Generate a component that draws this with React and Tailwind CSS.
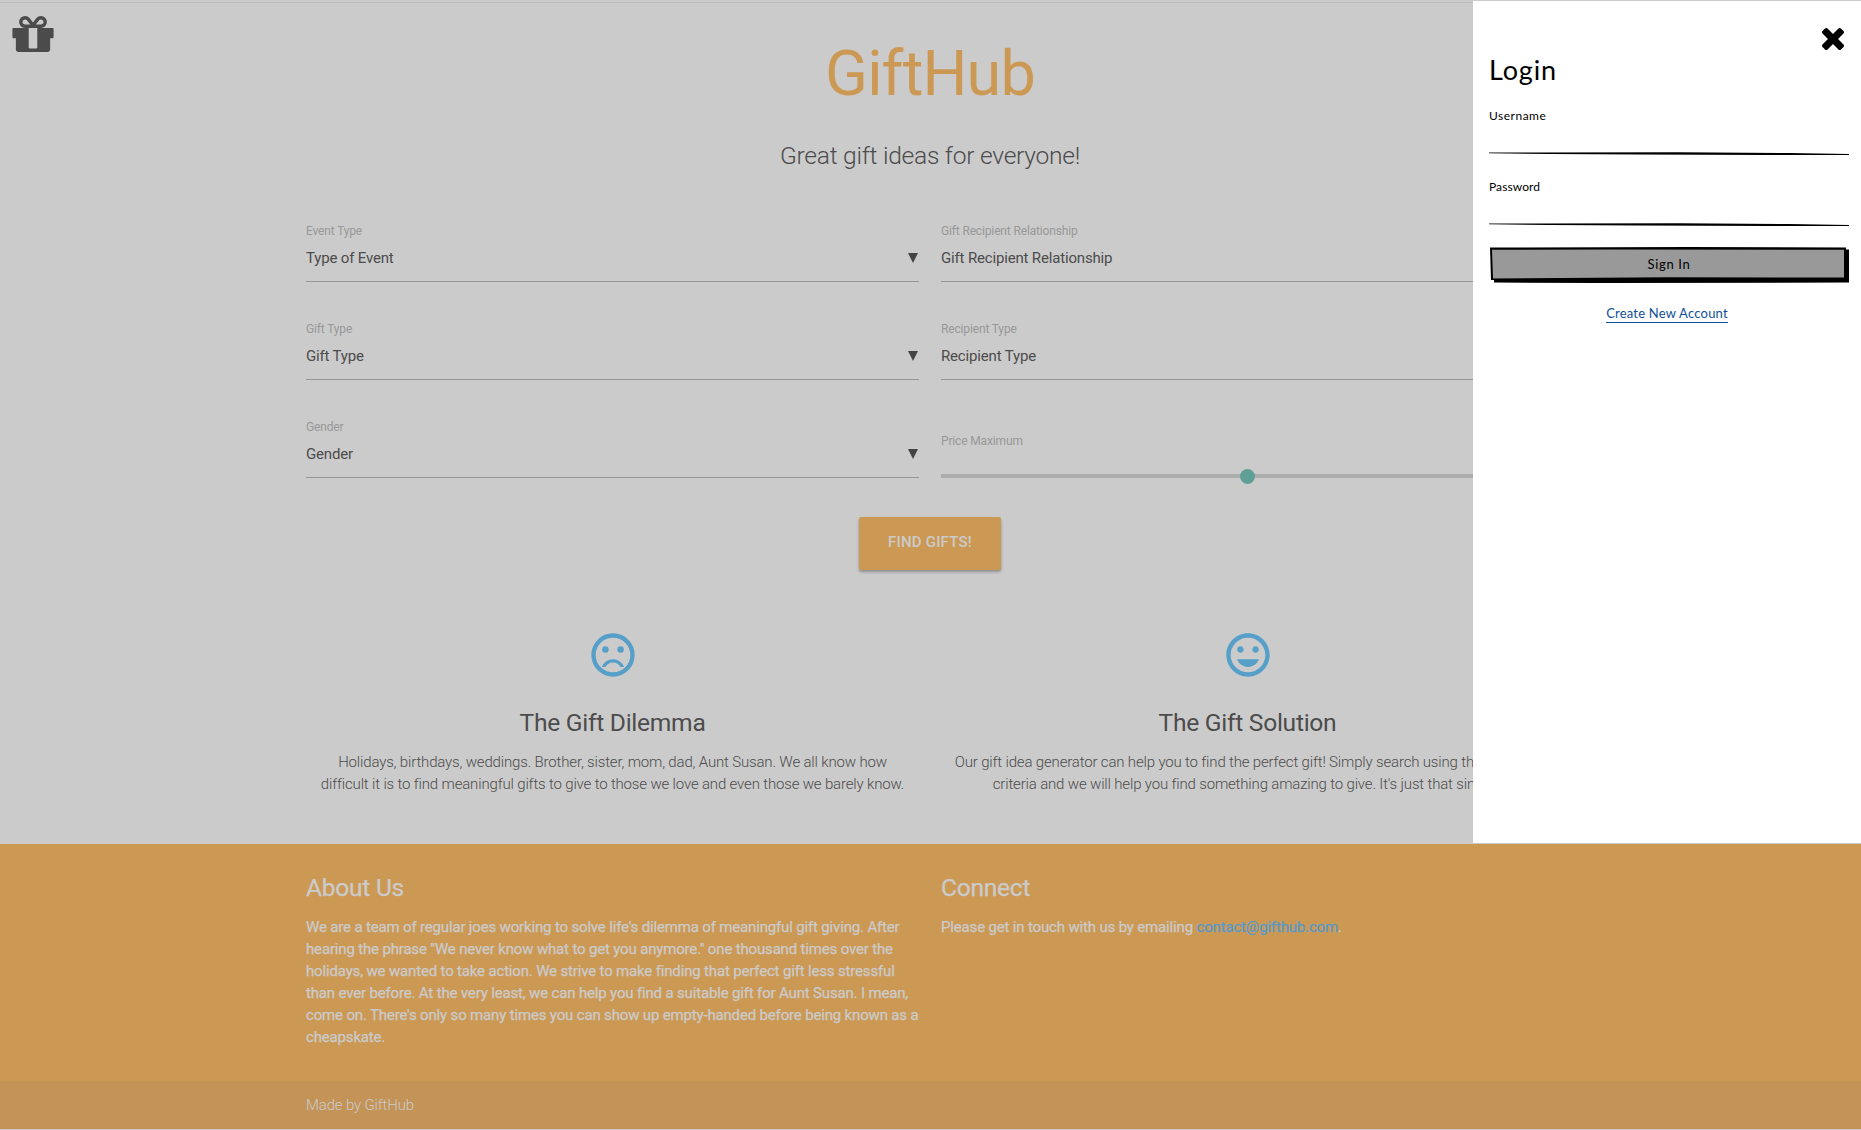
import { MdMood } from "react-icons/md";

function GiftIcon() {
  return (
    <svg viewBox="0 0 1536 1344" className="ml-[12px] mt-[16px] h-[36px] w-[42px]" fill="#4b4b4b">
      <g transform="translate(0 1344) scale(1 -1)">
        <path d="M928 180v56v468v192h-320v-192v-468v-56q0 -25 18 -38.5t46 -13.5h192q28 0 46 13.5t18 38.5zM472 1024h195l-126 161q-26 31 -69 31q-40 0 -68 -28t-28 -68t28 -68t68 -28zM1160 1120q0 40 -28 68t-68 28q-43 0 -69 -31l-125 -161h194q40 0 68 28t28 68zM1536 864v-320q0 -14 -9 -23t-23 -9h-96v-416q0 -40 -28 -68t-68 -28h-1088q-40 0 -68 28t-28 68v416h-96q-14 0 -23 9t-9 23v320q0 14 9 23t23 9h440q-93 0 -158.5 65.5t-65.5 158.5t65.5 158.5t158.5 65.5q107 0 168 -77l128 -165l128 165q61 77 168 77q93 0 158.5 -65.5t65.5 -158.5t-65.5 -158.5t-158.5 -65.5h440q14 0 23 -9t9 -23z" />
      </g>
    </svg>
  );
}

function CloseIcon() {
  return (
    <svg viewBox="110 0 1188 1188" className="h-[22px] w-[22px]" fill="#000">
      <g transform="translate(0 1170) scale(1 -1)">
        <path d="M1298 214q0 -40 -28 -68l-136 -136q-28 -28 -68 -28t-68 28l-294 294l-294 -294q-28 -28 -68 -28t-68 28l-136 136q-28 28 -28 68t28 68l294 294l-294 294q-28 28 -28 68t28 68l136 136q28 28 68 28t68 -28l294 -294l294 294q28 28 68 28t68 -28l136 -136q28 -28 28 -68t-28 -68l-294 -294l294 -294q28 -28 28 -68z" />
      </g>
    </svg>
  );
}

function SadIcon() {
  return (
    <svg viewBox="0 0 24 24" className="h-[52px] w-[52px]" fill="#559fc8">
      <circle cx="12" cy="12" r="9" fill="none" stroke="#559fc8" strokeWidth="2" />
      <circle cx="8.5" cy="9.5" r="1.5" />
      <circle cx="15.5" cy="9.5" r="1.5" />
      <path d="M12 14c-2.33 0-4.32 1.45-5.12 3.5h1.67c.69-1.19 1.97-2 3.45-2s2.75.81 3.45 2h1.67c-.8-2.05-2.79-3.5-5.12-3.5z" />
    </svg>
  );
}

function SelectField({ label, value }) {
  return (
    <div className="h-[59px] border-b border-[#979797]">
      <div className="text-[12px] leading-[16px] tracking-[-0.15px] text-[#989898]">{label}</div>
      <div className="mt-[8px] flex justify-between leading-[22px] text-[#4c4c4c]">
        <span>{value}</span>
        <svg viewBox="0 0 10 10" className="mr-[1px] mt-[6px] h-[10px] w-[10px]" fill="#444">
          <path d="M0 0H10L5 10z" />
        </svg>
      </div>
    </div>
  );
}

function PriceSlider() {
  return (
    <div className="pt-[14px]">
      <div className="text-[12px] leading-[16px] tracking-[-0.15px] text-[#989898]">Price Maximum</div>
      <div className="mt-[25px] flex h-[4px] items-center justify-center bg-[#acacac]">
        <div className="h-[15px] w-[15px] shrink-0 rounded-full bg-[#5f9f97]" />
      </div>
    </div>
  );
}

function SketchLine() {
  return (
    <svg viewBox="0 0 360 4" className="block h-[4px] w-[360px]" fill="#000">
      <path d="M0 0.6L50 0.5L190 0.2L300 1L360 2V3H280L150 2.5L60 2.1L0 1.3z" />
    </svg>
  );
}

function LoginPanel() {
  return (
    <aside className="absolute left-[1473px] top-[1px] h-[842px] w-[388px] bg-white pl-[16px] font-['Lato','Noto_Sans',sans-serif] text-black">
      <div className="flex h-[52px] justify-end pr-[17px] pt-[27px]">
        <CloseIcon />
      </div>
      <h2 className="h-[55px] text-[27px] leading-[34px] tracking-[0.85px]">Login</h2>
      <div className="h-[44px] text-[12px] leading-[16px] tracking-[0.5px]">Username</div>
      <SketchLine />
      <div className="mt-[23px] h-[44px] text-[12px] leading-[16px] tracking-[0.1px]">Password</div>
      <SketchLine />
      <button className="relative mt-[20px] block h-[36px] w-[360px] text-[13px] leading-[36px] tracking-[0.65px]">
        <svg viewBox="0 0 360 36" className="absolute inset-0 h-[36px] w-[360px]">
          <path d="M1 0.5L200 0L357 0.5V2.5H360V35.5L110 36L5 35.5V33H2z" fill="#000" />
          <path d="M3 2.8L120 2.4L355 2.8V30.6L180 30.2L4 31.5z" fill="#999" />
        </svg>
        <span className="relative -top-[1px]">Sign In</span>
      </button>
      <div className="mt-[18px] w-[356px] text-center">
        <a className="inline-block border-b border-[#0f4f96] text-[13px] leading-[17px] tracking-[0.22px] text-[#0f4f96]">Create New Account</a>
      </div>
    </aside>
  );
}

export default function App() {
  return (
    <div className="relative h-[1130px] w-[1861px] overflow-hidden bg-[#cbcbcb] font-['Roboto',sans-serif] text-[15px] leading-[22px] tracking-[-0.165px] text-[#4c4c4c]">
      <header className="flex h-[223px]">
        <div className="w-[306px] shrink-0">
          <div className="mt-[2px] h-px w-[1861px] bg-[#bcbcbc]" />
          <div className="-mt-[3px] flow-root">
            <GiftIcon />
          </div>
        </div>
        <div className="w-[1248px] pt-[39px] text-center">
          <h1 className="text-[63px] leading-[70px] tracking-[-0.85px] text-[#cc9955]">GiftHub</h1>
          <p className="mt-[32px] text-[24.6px] font-light leading-[30px] tracking-[-0.27px]">Great gift ideas for everyone!</p>
        </div>
      </header>

      <main className="ml-[306px] flex h-[621px] w-[1248px] flex-col items-center">
        <div className="grid w-full grid-cols-2 gap-x-[22px] gap-y-[39px]">
          <SelectField label="Event Type" value="Type of Event" />
          <SelectField label="Gift Recipient Relationship" value="Gift Recipient Relationship" />
          <SelectField label="Gift Type" value="Gift Type" />
          <SelectField label="Recipient Type" value="Recipient Type" />
          <SelectField label="Gender" value="Gender" />
          <PriceSlider />
        </div>
        <button className="mt-[39px] h-[53px] w-[142px] rounded-[2px] bg-[#cc9955] pb-[3px] font-medium tracking-[0.2px] text-[#cbcbcb] shadow-[0_2px_3px_rgba(0,0,0,0.3)]">
          FIND GIFTS!
        </button>
        <div className="mt-[59px] grid w-full grid-cols-2 gap-x-[22px] text-center">
          <section className="flex flex-col items-center">
            <SadIcon />
            <h2 className="mt-[27px] text-[24.6px] leading-[30px] tracking-[-0.28px]">The Gift Dilemma</h2>
            <p className="mt-[13px] whitespace-nowrap font-light">
              Holidays, birthdays, weddings. Brother, sister, mom, dad, Aunt Susan. We all know how
              <br />
              difficult it is to find meaningful gifts to give to those we love and even those we barely know.
            </p>
          </section>
          <section className="flex flex-col items-center">
            <MdMood className="h-[52px] w-[52px] text-[#559fc8]" />
            <h2 className="mt-[27px] text-[24.6px] leading-[30px] tracking-[-0.28px]">The Gift Solution</h2>
            <p className="mt-[13px] whitespace-nowrap font-light">
              Our gift idea generator can help you to find the perfect gift! Simply search using the provided
              <br />
              criteria and we will help you find something amazing to give. It's just that simple!
            </p>
          </section>
        </div>
      </main>

      <footer className="h-[285px] bg-[#cc9955] text-[#cbcbcb]">
        <div className="ml-[306px] grid h-[237px] w-[1248px] grid-cols-2 gap-x-[22px] pt-[29px] [-webkit-text-stroke:0.25px]">
          <section>
            <h2 className="text-[24.6px] leading-[30px] tracking-[-0.28px]">About Us</h2>
            <p className="mt-[13px] whitespace-nowrap">
              We are a team of regular joes working to solve life's dilemma of meaningful gift giving. After
              <br />
              hearing the phrase "We never know what to get you anymore." one thousand times over the
              <br />
              holidays, we wanted to take action. We strive to make finding that perfect gift less stressful
              <br />
              than ever before. At the very least, we can help you find a suitable gift for Aunt Susan. I mean,
              <br />
              come on. There's only so many times you can show up empty-handed before being known as a
              <br />
              cheapskate.
            </p>
          </section>
          <section>
            <h2 className="text-[24.6px] leading-[30px] tracking-[-0.28px]">Connect</h2>
            <p className="mt-[13px]">
              Please get in touch with us by emailing <a className="text-[#5599cc]">contact@gifthub.com</a>.
            </p>
          </section>
        </div>
        <div className="h-[48px] bg-[#c39357] px-[306px] pt-[13px] font-light">Made by GiftHub</div>
      </footer>

      <LoginPanel />
    </div>
  );
}
